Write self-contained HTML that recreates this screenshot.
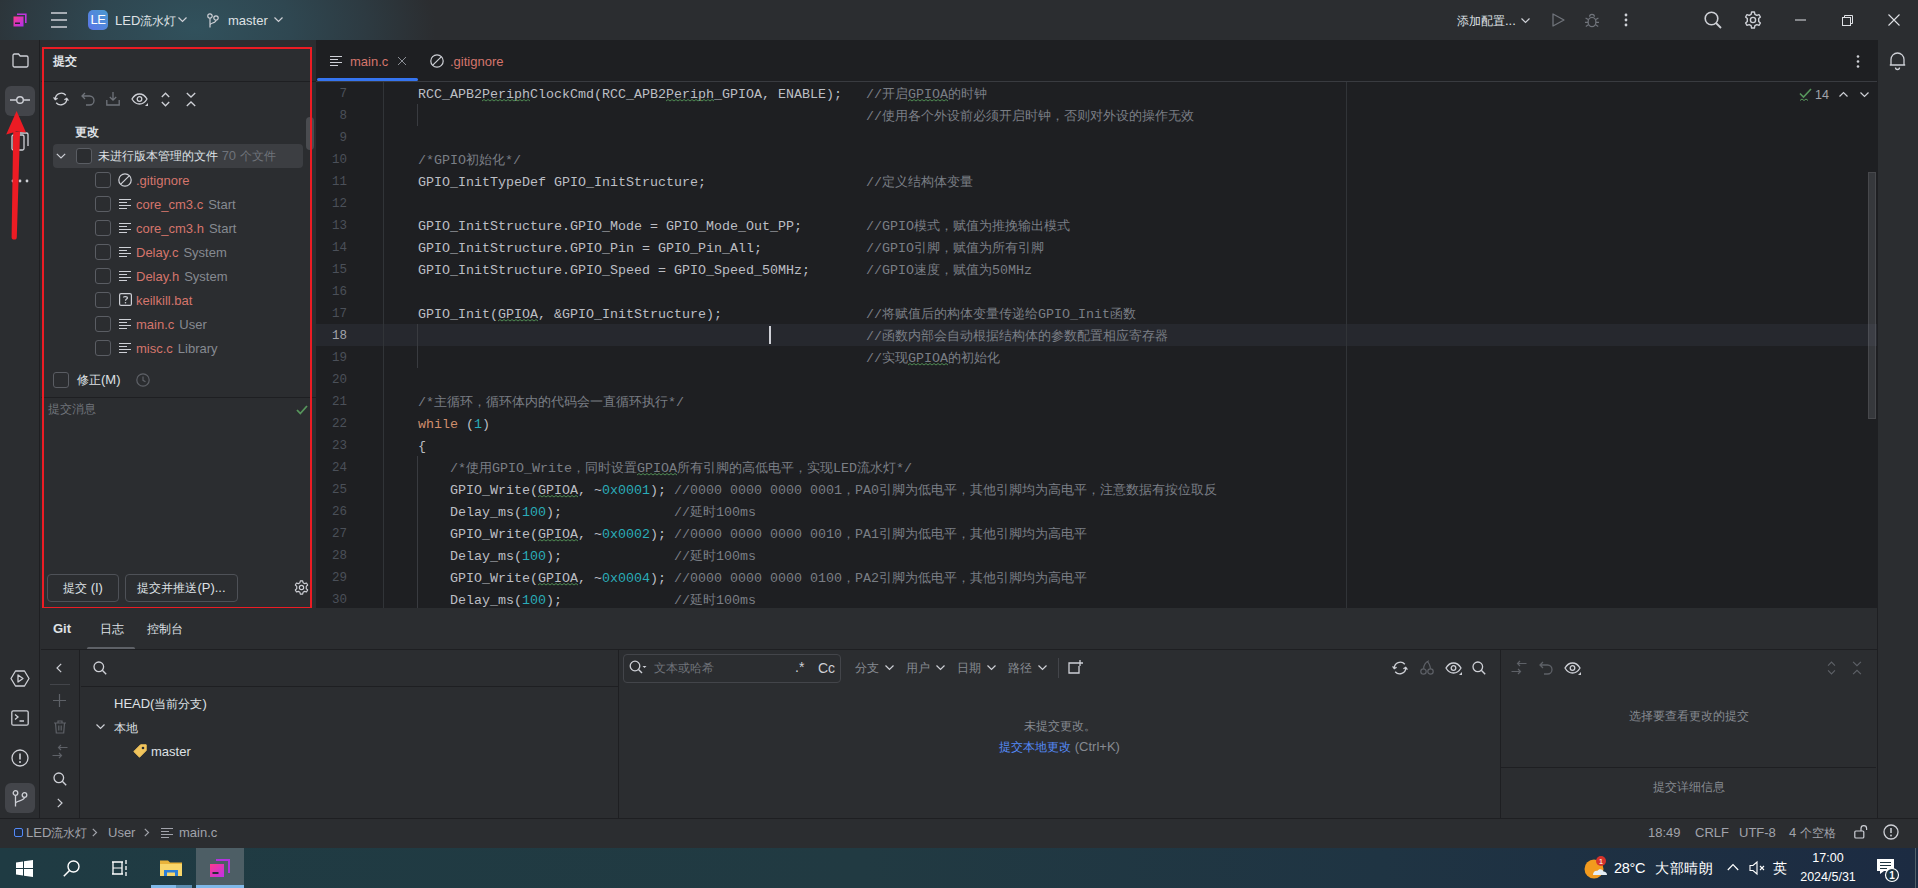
<!DOCTYPE html>
<html><head><meta charset="utf-8">
<style>
@font-face{font-family:"CJKBoxS";src:local("Liberation Sans");unicode-range:U+3000-303F,U+4E00-9FFF,U+FF00-FFEF;size-adjust:127%}
*{margin:0;padding:0;box-sizing:border-box}
html,body{width:1918px;height:888px;overflow:hidden;background:#2B2D30;font-family:"Liberation Sans",sans-serif;font-size:13px;color:#DFE1E5}
.a{position:absolute}
.t{position:absolute;white-space:pre;line-height:16px}
svg{position:absolute;overflow:visible}
#title{left:0;top:0;width:1918px;height:40px;background:radial-gradient(ellipse 240px 150px at 195px 28px,#31515C 0%,#2F4751 40%,#2D3A41 72%,#2B2D30 100%)}
#lstrip{left:0;top:40px;width:40px;height:778px;background:#2B2D30;border-right:1px solid #1E1F22}
#commit{left:41px;top:40px;width:275px;height:568px;background:#2B2D30}
#editor{left:316px;top:40px;width:1561px;height:568px;background:#1E1F22}
#rstrip{left:1877px;top:40px;width:41px;height:778px;background:#2B2D30;border-left:1px solid #1E1F22}
#bottom{left:41px;top:608px;width:1836px;height:210px;background:#2B2D30}
#status{left:0;top:818px;width:1918px;height:30px;background:#2B2D30;border-top:1px solid #1E1F22}
#taskbar{left:0;top:848px;width:1918px;height:40px;background:linear-gradient(90deg,#1F3B43 0%,#213A42 45%,#1F3443 72%,#1C2B42 100%)}
.code{font-family:"Liberation Mono",monospace;font-size:13.33px;line-height:22px;color:#BCBEC4}
.cm{color:#7A7E85}.kw{color:#CF8E6D}.nu{color:#2AACB8}
.ln{font-family:"Liberation Mono",monospace;font-size:12.5px;color:#4B5059;text-align:right;width:40px;line-height:22px}
.cb{position:absolute;width:16px;height:16px;border:1px solid #5A5D63;border-radius:3px;background:#2B2D30}
.zc{display:inline-block;overflow:visible;white-space:pre;text-align:justify;text-align-last:justify;font-family:"CJKBoxS","Liberation Sans",sans-serif}.code .zc{font-family:"CJKBoxS","Liberation Mono",monospace}.zu{font-size:12px}
.red{color:#D5756C}.gr{color:#868A91}
</style></head><body>
<div id="title" class="a"></div>

<!-- TITLE BAR -->
<svg style="left:13px;top:13px" width="14" height="14" viewBox="0 0 14 14"><defs><linearGradient id="gB" x1="0" y1="0" x2="1" y2="1"><stop offset="0" stop-color="#FF3A8C"/><stop offset="1" stop-color="#B030F0"/></linearGradient></defs><path d="M4 1.2H12.8V10" fill="none" stroke="#C035E0" stroke-width="1.6"/><rect x="0.5" y="3.5" width="10" height="10" fill="url(#gB)"/><rect x="2" y="9.5" width="5" height="1.5" fill="#2A2333"/></svg>
<svg style="left:51px;top:12px" width="16" height="16" viewBox="0 0 16 16"><path d="M0 1H16M0 8H16M0 15H16" stroke="#CED0D6" stroke-width="1.5"/></svg>
<div class="a" style="left:88px;top:10px;width:20px;height:20px;border-radius:5px;background:linear-gradient(45deg,#5B74E8,#4A9AD0)"></div>
<div class="t" style="left:88px;top:12px;width:20px;text-align:center;font-size:13px;color:#fff;letter-spacing:-0.5px">LE</div>
<div class="t" style="left:115px;top:13px;color:#DFE1E5">LED<span class="zc zu" style="width:36px">流水灯</span></div>
<svg style="left:178px;top:17px" width="9" height="6" viewBox="0 0 9 6"><path d="M0.5 0.5L4.5 4.5L8.5 0.5" fill="none" stroke="#CED0D6" stroke-width="1.2"/></svg>
<svg style="left:207px;top:13px" width="12" height="15" viewBox="0 0 12 15"><circle cx="3" cy="3" r="2.2" fill="none" stroke="#CED0D6" stroke-width="1.2"/><circle cx="9" cy="5" r="2.2" fill="none" stroke="#CED0D6" stroke-width="1.2"/><path d="M3 5.2V14.5M9 7.2C9 10 3 10 3 12" fill="none" stroke="#CED0D6" stroke-width="1.2"/></svg>
<div class="t" style="left:228px;top:13px;color:#DFE1E5">master</div>
<svg style="left:274px;top:17px" width="9" height="6" viewBox="0 0 9 6"><path d="M0.5 0.5L4.5 4.5L8.5 0.5" fill="none" stroke="#CED0D6" stroke-width="1.2"/></svg>
<div class="t" style="left:1457px;top:13px;color:#DFE1E5"><span class="zc zu" style="width:48px">添加配置</span>...</div>
<svg style="left:1521px;top:18px" width="9" height="6" viewBox="0 0 9 6"><path d="M0.5 0.5L4.5 4.5L8.5 0.5" fill="none" stroke="#CED0D6" stroke-width="1.2"/></svg>
<svg style="left:1552px;top:13px" width="13" height="14" viewBox="0 0 13 14"><path d="M1 1L12 7L1 13Z" fill="none" stroke="#6F737A" stroke-width="1.3" stroke-linejoin="round"/></svg>
<svg style="left:1584px;top:12px" width="16" height="16" viewBox="0 0 16 16"><path d="M5.6 4.8A2.4 2.4 0 0 1 10.4 4.8" fill="none" stroke="#6F737A" stroke-width="1.3"/><ellipse cx="8" cy="10" rx="3.9" ry="4.6" fill="none" stroke="#6F737A" stroke-width="1.3"/><path d="M4.2 7.6L1.6 6M4 10.3H1M4.4 12.8L1.8 14.4M11.8 7.6L14.4 6M12 10.3H15M11.6 12.8L14.2 14.4" stroke="#6F737A" stroke-width="1.2"/></svg>
<svg style="left:1624px;top:13px" width="4" height="14" viewBox="0 0 4 14"><circle cx="2" cy="2" r="1.4" fill="#CED0D6"/><circle cx="2" cy="7" r="1.4" fill="#CED0D6"/><circle cx="2" cy="12" r="1.4" fill="#CED0D6"/></svg>
<svg style="left:1704px;top:11px" width="18" height="18" viewBox="0 0 18 18"><circle cx="7.5" cy="7.5" r="6.3" fill="none" stroke="#CED0D6" stroke-width="1.6"/><path d="M12 12L17 17" stroke="#CED0D6" stroke-width="1.8"/></svg>
<svg style="left:1744px;top:11px" width="18" height="18" viewBox="0 0 18 18"><path d="M7.6 1H10.4L10.9 3.3L12.8 4.4L15 3.6L16.4 6L14.7 7.6V10.4L16.4 12L15 14.4L12.8 13.6L10.9 14.7L10.4 17H7.6L7.1 14.7L5.2 13.6L3 14.4L1.6 12L3.3 10.4V7.6L1.6 6L3 3.6L5.2 4.4L7.1 3.3Z" fill="none" stroke="#CED0D6" stroke-width="1.4" stroke-linejoin="round"/><circle cx="9" cy="9" r="2.6" fill="none" stroke="#CED0D6" stroke-width="1.4"/></svg>
<svg style="left:1795px;top:19px" width="11" height="2" viewBox="0 0 11 2"><path d="M0 1H11" stroke="#DFE1E5" stroke-width="1"/></svg>
<svg style="left:1842px;top:15px" width="11" height="11" viewBox="0 0 11 11"><rect x="0.5" y="2.5" width="8" height="8" fill="none" stroke="#DFE1E5"/><path d="M2.5 2.5V0.5H10.5V8.5H8.5" fill="none" stroke="#DFE1E5"/></svg>
<svg style="left:1888px;top:14px" width="12" height="12" viewBox="0 0 12 12"><path d="M0.5 0.5L11.5 11.5M11.5 0.5L0.5 11.5" stroke="#DFE1E5" stroke-width="1.1"/></svg>
<div id="lstrip" class="a"></div>
<div id="commit" class="a"></div>
<!-- LEFT STRIP -->
<svg style="left:12px;top:53px" width="17" height="15" viewBox="0 0 17 15"><path d="M1 2.5C1 1.7 1.6 1 2.4 1H6.5L8.2 3H14.6C15.4 3 16 3.6 16 4.4V12.6C16 13.4 15.4 14 14.6 14H2.4C1.6 14 1 13.4 1 12.6Z" fill="none" stroke="#CED0D6" stroke-width="1.3"/></svg>
<div class="a" style="left:5px;top:86px;width:30px;height:30px;border-radius:6px;background:#43454A"></div>
<svg style="left:10px;top:95px" width="20" height="10" viewBox="0 0 20 10"><path d="M0 5H6.5M13.5 5H20" stroke="#CED0D6" stroke-width="1.4"/><circle cx="10" cy="5" r="3.3" fill="none" stroke="#CED0D6" stroke-width="1.4"/></svg>
<svg style="left:11px;top:132px" width="18" height="19" viewBox="0 0 18 19"><rect x="1" y="3" width="12" height="15" rx="1.5" fill="none" stroke="#CED0D6" stroke-width="1.3"/><path d="M5 1H15.5C16.3 1 17 1.7 17 2.5V14" fill="none" stroke="#CED0D6" stroke-width="1.3"/></svg>
<svg style="left:11px;top:179px" width="18" height="4" viewBox="0 0 18 4"><circle cx="2" cy="2" r="1.4" fill="#CED0D6"/><circle cx="9" cy="2" r="1.4" fill="#CED0D6"/><circle cx="16" cy="2" r="1.4" fill="#CED0D6"/></svg>
<svg style="left:4px;top:110px" width="26" height="130" viewBox="0 0 26 130"><path d="M9.2 22L16 22L12.8 127A2.6 2.6 0 0 1 7.6 127Z" fill="#EC1C24"/><path d="M12.6 1L2.2 24.5L12.5 21.5L22 22.5Z" fill="#EC1C24"/></svg>
<svg style="left:10px;top:670px" width="20" height="17" viewBox="0 0 20 17"><path d="M5.5 1H14.5L19 8.5L14.5 16H5.5L1 8.5Z" fill="none" stroke="#CED0D6" stroke-width="1.3" stroke-linejoin="round"/><path d="M8 5L13 8.5L8 12Z" fill="none" stroke="#CED0D6" stroke-width="1.3" stroke-linejoin="round"/></svg>
<svg style="left:11px;top:710px" width="18" height="16" viewBox="0 0 18 16"><rect x="0.8" y="0.8" width="16.4" height="14.4" rx="1.5" fill="none" stroke="#CED0D6" stroke-width="1.3"/><path d="M4 4.5L7 7L4 9.5M8.5 11H13" fill="none" stroke="#CED0D6" stroke-width="1.3"/></svg>
<svg style="left:11px;top:749px" width="18" height="18" viewBox="0 0 18 18"><circle cx="9" cy="9" r="8" fill="none" stroke="#CED0D6" stroke-width="1.3"/><path d="M9 4.5V10.5" stroke="#CED0D6" stroke-width="1.6"/><circle cx="9" cy="13" r="1" fill="#CED0D6"/></svg>
<div class="a" style="left:5px;top:783px;width:30px;height:30px;border-radius:6px;background:#43454A"></div>
<svg style="left:12px;top:790px" width="16" height="17" viewBox="0 0 16 17"><circle cx="3.5" cy="3" r="2.3" fill="none" stroke="#CED0D6" stroke-width="1.3"/><circle cx="12.5" cy="5" r="2.3" fill="none" stroke="#CED0D6" stroke-width="1.3"/><path d="M3.5 5.3V16.5M12.5 7.3C12.5 11 3.5 10.5 3.5 13.5" fill="none" stroke="#CED0D6" stroke-width="1.3"/></svg>


<!-- COMMIT PANEL -->
<div class="t" style="left:53px;top:53px;font-weight:bold;color:#DFE1E5"><span class="zc zu" style="width:24px">提交</span></div>
<div class="a" style="left:41px;top:81px;width:275px;height:1px;background:#1E1F22"></div>
<svg style="left:53px;top:91px" width="16" height="16" viewBox="0 0 16 16"><path d="M12.8 4.2A6 6 0 0 0 2.3 8.3M3.2 11.8A6 6 0 0 0 13.7 7.7" fill="none" stroke="#CED0D6" stroke-width="1.3"/><path d="M0.6 6.3L2.3 8.6L4.6 7.2M15.4 9.7L13.7 7.4L11.4 8.8" fill="none" stroke="#CED0D6" stroke-width="1.3"/></svg>
<svg style="left:81px;top:92px" width="14" height="14" viewBox="0 0 14 14"><path d="M4 1L1 4L4 7M1 4H8.5A4.5 4.5 0 0 1 8.5 13H5" fill="none" stroke="#6F737A" stroke-width="1.3"/></svg>
<svg style="left:106px;top:92px" width="14" height="14" viewBox="0 0 14 14"><path d="M7 0V8M3.8 5L7 8.2L10.2 5M0.8 8V13H13.2V8" fill="none" stroke="#6F737A" stroke-width="1.3"/></svg>
<svg style="left:131px;top:93px" width="18" height="14" viewBox="0 0 18 14"><path d="M1 6C3 2.5 5.5 1 8.5 1S14 2.5 16 6C14 9.5 11.5 11 8.5 11S3 9.5 1 6Z" fill="none" stroke="#CED0D6" stroke-width="1.3"/><circle cx="8.5" cy="6" r="2.3" fill="none" stroke="#CED0D6" stroke-width="1.3"/><path d="M17 10V13H14Z" fill="#CED0D6"/></svg>
<svg style="left:161px;top:92px" width="9" height="15" viewBox="0 0 9 15"><path d="M0.8 5L4.5 1.2L8.2 5M0.8 10L4.5 13.8L8.2 10" fill="none" stroke="#CED0D6" stroke-width="1.3"/></svg>
<svg style="left:186px;top:92px" width="10" height="15" viewBox="0 0 10 15"><path d="M0.8 1L5 5L9.2 1M0.8 14L5 10L9.2 14" fill="none" stroke="#CED0D6" stroke-width="1.3"/></svg>
<div class="t" style="left:75px;top:124px;font-weight:bold;color:#DFE1E5"><span class="zc zu" style="width:24px">更改</span></div>
<div class="a" style="left:53px;top:144px;width:250px;height:24px;border-radius:4px;background:#3C3E42"></div>
<svg style="left:56px;top:153px" width="10" height="6" viewBox="0 0 10 6"><path d="M0.8 0.8L5 5L9.2 0.8" fill="none" stroke="#CED0D6" stroke-width="1.2"/></svg>
<div class="cb" style="left:76px;top:148px"></div>
<div class="t" style="left:98px;top:148px;color:#DFE1E5"><span class="zc zu" style="width:120px">未进行版本管理的文件</span> <span class="gr" style="color:#6F737A">70 <span class="zc zu" style="width:36px">个文件</span></span></div>
<div class="cb" style="left:95px;top:172px"></div>
<svg style="left:118px;top:173px" width="14" height="14" viewBox="0 0 14 14"><circle cx="7" cy="7" r="6.2" fill="none" stroke="#CED0D6" stroke-width="1.2"/><path d="M2.8 11.2L11.2 2.8" stroke="#CED0D6" stroke-width="1.2"/></svg>
<div class="t" style="left:136px;top:173px"><span class="red">.gitignore</span></div>
<div class="cb" style="left:95px;top:196px"></div>
<svg style="left:119px;top:199px" width="13" height="10" viewBox="0 0 13 10"><path d="M0 0.5H12M0 3.5H8M0 6.5H12M0 9.5H8" stroke="#CED0D6" stroke-width="1"/></svg>
<div class="t" style="left:136px;top:197px"><span class="red">core_cm3.c</span><span class="gr" style="margin-left:5px">Start</span></div>
<div class="cb" style="left:95px;top:220px"></div>
<svg style="left:119px;top:223px" width="13" height="10" viewBox="0 0 13 10"><path d="M0 0.5H12M0 3.5H8M0 6.5H12M0 9.5H8" stroke="#CED0D6" stroke-width="1"/></svg>
<div class="t" style="left:136px;top:221px"><span class="red">core_cm3.h</span><span class="gr" style="margin-left:5px">Start</span></div>
<div class="cb" style="left:95px;top:244px"></div>
<svg style="left:119px;top:247px" width="13" height="10" viewBox="0 0 13 10"><path d="M0 0.5H12M0 3.5H8M0 6.5H12M0 9.5H8" stroke="#CED0D6" stroke-width="1"/></svg>
<div class="t" style="left:136px;top:245px"><span class="red">Delay.c</span><span class="gr" style="margin-left:5px">System</span></div>
<div class="cb" style="left:95px;top:268px"></div>
<svg style="left:119px;top:271px" width="13" height="10" viewBox="0 0 13 10"><path d="M0 0.5H12M0 3.5H8M0 6.5H12M0 9.5H8" stroke="#CED0D6" stroke-width="1"/></svg>
<div class="t" style="left:136px;top:269px"><span class="red">Delay.h</span><span class="gr" style="margin-left:5px">System</span></div>
<div class="cb" style="left:95px;top:292px"></div>
<svg style="left:119px;top:293px" width="13" height="13" viewBox="0 0 13 13"><rect x="0.6" y="0.6" width="11.8" height="11.8" rx="1.5" fill="none" stroke="#CED0D6" stroke-width="1.2"/><path d="M4.5 4.6C4.5 3.2 8.5 3.2 8.5 4.8C8.5 6.2 6.5 6 6.5 7.8" fill="none" stroke="#CED0D6" stroke-width="1.2"/><circle cx="6.5" cy="9.8" r="0.8" fill="#CED0D6"/></svg>
<div class="t" style="left:136px;top:293px"><span class="red">keilkill.bat</span></div>
<div class="cb" style="left:95px;top:316px"></div>
<svg style="left:119px;top:319px" width="13" height="10" viewBox="0 0 13 10"><path d="M0 0.5H12M0 3.5H8M0 6.5H12M0 9.5H8" stroke="#CED0D6" stroke-width="1"/></svg>
<div class="t" style="left:136px;top:317px"><span class="red">main.c</span><span class="gr" style="margin-left:5px">User</span></div>
<div class="cb" style="left:95px;top:340px"></div>
<svg style="left:119px;top:343px" width="13" height="10" viewBox="0 0 13 10"><path d="M0 0.5H12M0 3.5H8M0 6.5H12M0 9.5H8" stroke="#CED0D6" stroke-width="1"/></svg>
<div class="t" style="left:136px;top:341px"><span class="red">misc.c</span><span class="gr" style="margin-left:5px">Library</span></div>

<div class="a" style="left:306px;top:117px;width:8px;height:33px;border-radius:4px;background:#4A4C50"></div>
<div class="cb" style="left:53px;top:372px"></div>
<div class="t" style="left:77px;top:372px;color:#DFE1E5"><span class="zc zu" style="width:24px">修正</span>(M)</div>
<svg style="left:136px;top:373px" width="14" height="14" viewBox="0 0 14 14"><circle cx="7" cy="7" r="6.2" fill="none" stroke="#5E6167" stroke-width="1.2"/><path d="M7 3.5V7.3L9.5 8.8" fill="none" stroke="#5E6167" stroke-width="1.2"/></svg>
<div class="a" style="left:41px;top:397px;width:275px;height:1px;background:#1E1F22"></div>
<div class="t" style="left:48px;top:401px;color:#6F737A"><span class="zc zu" style="width:48px">提交消息</span></div>
<svg style="left:296px;top:405px" width="12" height="10" viewBox="0 0 12 10"><path d="M1 5L4.3 8.5L11 1" fill="none" stroke="#57965C" stroke-width="1.8"/></svg>
<div class="a" style="left:47px;top:574px;width:72px;height:28px;border:1px solid #4E5157;border-radius:4px"></div>
<div class="t" style="left:47px;top:580px;width:72px;text-align:center;color:#DFE1E5"><span class="zc zu" style="width:24px">提交</span> (I)</div>
<div class="a" style="left:125px;top:574px;width:113px;height:28px;border:1px solid #4E5157;border-radius:4px"></div>
<div class="t" style="left:125px;top:580px;width:113px;text-align:center;color:#DFE1E5"><span class="zc zu" style="width:60px">提交并推送</span>(P)...</div>
<svg style="left:294px;top:580px" width="15" height="15" viewBox="0 0 18 18"><path d="M7.6 1H10.4L10.9 3.3L12.8 4.4L15 3.6L16.4 6L14.7 7.6V10.4L16.4 12L15 14.4L12.8 13.6L10.9 14.7L10.4 17H7.6L7.1 14.7L5.2 13.6L3 14.4L1.6 12L3.3 10.4V7.6L1.6 6L3 3.6L5.2 4.4L7.1 3.3Z" fill="none" stroke="#CED0D6" stroke-width="1.4" stroke-linejoin="round"/><circle cx="9" cy="9" r="2.6" fill="none" stroke="#CED0D6" stroke-width="1.4"/></svg>
<div class="a" style="left:42px;top:47px;width:270px;height:562px;border:2px solid #EC1C24"></div>
<div id="editor" class="a"></div>
<div id="rstrip" class="a"></div>
<!-- EDITOR -->
<svg style="left:330px;top:56px" width="13" height="10" viewBox="0 0 13 10"><path d="M0 0.5H12M0 3.5H8M0 6.5H12M0 9.5H8" stroke="#CED0D6" stroke-width="1"/></svg>
<div class="t" style="left:350px;top:54px;color:#D5756C">main.c</div>
<svg style="left:398px;top:57px" width="8" height="8" viewBox="0 0 8 8"><path d="M0 0L8 8M8 0L0 8" stroke="#8C8F96" stroke-width="1"/></svg>
<div class="a" style="left:317px;top:78px;width:101px;height:3px;border-radius:2px;background:#3574F0"></div>
<svg style="left:430px;top:54px" width="14" height="14" viewBox="0 0 14 14"><circle cx="7" cy="7" r="6.2" fill="none" stroke="#CED0D6" stroke-width="1.2"/><path d="M2.8 11.2L11.2 2.8" stroke="#CED0D6" stroke-width="1.2"/></svg>
<div class="t" style="left:450px;top:54px;color:#D5756C">.gitignore</div>
<svg style="left:1856px;top:55px" width="4" height="13" viewBox="0 0 4 13"><circle cx="2" cy="1.5" r="1.3" fill="#CED0D6"/><circle cx="2" cy="6.5" r="1.3" fill="#CED0D6"/><circle cx="2" cy="11.5" r="1.3" fill="#CED0D6"/></svg>
<div class="a" style="left:316px;top:81px;width:1561px;height:1px;background:#393B40"></div>
<div class="a" style="left:316px;top:324px;width:1561px;height:22px;background:#26282E"></div>
<div class="a" style="left:383px;top:82px;width:1px;height:526px;background:#313438"></div>
<div class="a" style="left:1346px;top:82px;width:1px;height:526px;background:#313438"></div>
<div class="a" style="left:417px;top:104px;width:1px;height:22px;background:#393B40"></div>
<div class="a" style="left:417px;top:324px;width:1px;height:44px;background:#393B40"></div>
<div class="a" style="left:417px;top:456px;width:1px;height:152px;background:#393B40"></div>
<div class="t ln" style="left:307px;margin-top:1px;top:82px;color:#4B5059">7</div>
<div class="t ln" style="left:307px;margin-top:1px;top:104px;color:#4B5059">8</div>
<div class="t ln" style="left:307px;margin-top:1px;top:126px;color:#4B5059">9</div>
<div class="t ln" style="left:307px;margin-top:1px;top:148px;color:#4B5059">10</div>
<div class="t ln" style="left:307px;margin-top:1px;top:170px;color:#4B5059">11</div>
<div class="t ln" style="left:307px;margin-top:1px;top:192px;color:#4B5059">12</div>
<div class="t ln" style="left:307px;margin-top:1px;top:214px;color:#4B5059">13</div>
<div class="t ln" style="left:307px;margin-top:1px;top:236px;color:#4B5059">14</div>
<div class="t ln" style="left:307px;margin-top:1px;top:258px;color:#4B5059">15</div>
<div class="t ln" style="left:307px;margin-top:1px;top:280px;color:#4B5059">16</div>
<div class="t ln" style="left:307px;margin-top:1px;top:302px;color:#4B5059">17</div>
<div class="t ln" style="left:307px;margin-top:1px;top:324px;color:#A1A3AB">18</div>
<div class="t ln" style="left:307px;margin-top:1px;top:346px;color:#4B5059">19</div>
<div class="t ln" style="left:307px;margin-top:1px;top:368px;color:#4B5059">20</div>
<div class="t ln" style="left:307px;margin-top:1px;top:390px;color:#4B5059">21</div>
<div class="t ln" style="left:307px;margin-top:1px;top:412px;color:#4B5059">22</div>
<div class="t ln" style="left:307px;margin-top:1px;top:434px;color:#4B5059">23</div>
<div class="t ln" style="left:307px;margin-top:1px;top:456px;color:#4B5059">24</div>
<div class="t ln" style="left:307px;margin-top:1px;top:478px;color:#4B5059">25</div>
<div class="t ln" style="left:307px;margin-top:1px;top:500px;color:#4B5059">26</div>
<div class="t ln" style="left:307px;margin-top:1px;top:522px;color:#4B5059">27</div>
<div class="t ln" style="left:307px;margin-top:1px;top:544px;color:#4B5059">28</div>
<div class="t ln" style="left:307px;margin-top:1px;top:566px;color:#4B5059">29</div>
<div class="t ln" style="left:307px;margin-top:1px;top:588px;color:#4B5059">30</div>

<div class="t code" style="left:386px;margin-top:1.5px;top:82px">    RCC_APB2PeriphClockCmd(RCC_APB2Periph_GPIOA, ENABLE);   <span class="cm">//<span class="zc" style="width:26px">开启</span>GPIOA<span class="zc" style="width:39px">的时钟</span></span></div>
<div class="t code" style="left:386px;margin-top:1.5px;top:104px">                                                            <span class="cm">//<span class="zc" style="width:312px">使用各个外设前必须开启时钟，否则对外设的操作无效</span></span></div>
<div class="t code" style="left:386px;margin-top:1.5px;top:126px"></div>
<div class="t code" style="left:386px;margin-top:1.5px;top:148px">    <span class="cm">/*GPIO<span class="zc" style="width:39px">初始化</span>*/</span></div>
<div class="t code" style="left:386px;margin-top:1.5px;top:170px">    GPIO_InitTypeDef GPIO_InitStructure;                    <span class="cm">//<span class="zc" style="width:91px">定义结构体变量</span></span></div>
<div class="t code" style="left:386px;margin-top:1.5px;top:192px"></div>
<div class="t code" style="left:386px;margin-top:1.5px;top:214px">    GPIO_InitStructure.GPIO_Mode = GPIO_Mode_Out_PP;        <span class="cm">//GPIO<span class="zc" style="width:156px">模式，赋值为推挽输出模式</span></span></div>
<div class="t code" style="left:386px;margin-top:1.5px;top:236px">    GPIO_InitStructure.GPIO_Pin = GPIO_Pin_All;             <span class="cm">//GPIO<span class="zc" style="width:130px">引脚，赋值为所有引脚</span></span></div>
<div class="t code" style="left:386px;margin-top:1.5px;top:258px">    GPIO_InitStructure.GPIO_Speed = GPIO_Speed_50MHz;       <span class="cm">//GPIO<span class="zc" style="width:78px">速度，赋值为</span>50MHz</span></div>
<div class="t code" style="left:386px;margin-top:1.5px;top:280px"></div>
<div class="t code" style="left:386px;margin-top:1.5px;top:302px">    GPIO_Init(GPIOA, &amp;GPIO_InitStructure);                  <span class="cm">//<span class="zc" style="width:156px">将赋值后的构体变量传递给</span>GPIO_Init<span class="zc" style="width:26px">函数</span></span></div>
<div class="t code" style="left:386px;margin-top:1.5px;top:324px">                                                            <span class="cm">//<span class="zc" style="width:286px">函数内部会自动根据结构体的参数配置相应寄存器</span></span></div>
<div class="t code" style="left:386px;margin-top:1.5px;top:346px">                                                            <span class="cm">//<span class="zc" style="width:26px">实现</span>GPIOA<span class="zc" style="width:52px">的初始化</span></span></div>
<div class="t code" style="left:386px;margin-top:1.5px;top:368px"></div>
<div class="t code" style="left:386px;margin-top:1.5px;top:390px">    <span class="cm">/*<span class="zc" style="width:234px">主循环，循环体内的代码会一直循环执行</span>*/</span></div>
<div class="t code" style="left:386px;margin-top:1.5px;top:412px">    <span class="kw">while</span> (<span class="nu">1</span>)</div>
<div class="t code" style="left:386px;margin-top:1.5px;top:434px">    {</div>
<div class="t code" style="left:386px;margin-top:1.5px;top:456px">        <span class="cm">/*<span class="zc" style="width:26px">使用</span>GPIO_Write<span class="zc" style="width:65px">，同时设置</span>GPIOA<span class="zc" style="width:156px">所有引脚的高低电平，实现</span>LED<span class="zc" style="width:39px">流水灯</span>*/</span></div>
<div class="t code" style="left:386px;margin-top:1.5px;top:478px">        GPIO_Write(GPIOA, ~<span class="nu">0x0001</span>); <span class="cm">//0000 0000 0000 0001<span class="zc" style="width:13px">，</span>PA0<span class="zc" style="width:338px">引脚为低电平，其他引脚均为高电平，注意数据有按位取反</span></span></div>
<div class="t code" style="left:386px;margin-top:1.5px;top:500px">        Delay_ms(<span class="nu">100</span>);              <span class="cm">//<span class="zc" style="width:26px">延时</span>100ms</span></div>
<div class="t code" style="left:386px;margin-top:1.5px;top:522px">        GPIO_Write(GPIOA, ~<span class="nu">0x0002</span>); <span class="cm">//0000 0000 0000 0010<span class="zc" style="width:13px">，</span>PA1<span class="zc" style="width:208px">引脚为低电平，其他引脚均为高电平</span></span></div>
<div class="t code" style="left:386px;margin-top:1.5px;top:544px">        Delay_ms(<span class="nu">100</span>);              <span class="cm">//<span class="zc" style="width:26px">延时</span>100ms</span></div>
<div class="t code" style="left:386px;margin-top:1.5px;top:566px">        GPIO_Write(GPIOA, ~<span class="nu">0x0004</span>); <span class="cm">//0000 0000 0000 0100<span class="zc" style="width:13px">，</span>PA2<span class="zc" style="width:208px">引脚为低电平，其他引脚均为高电平</span></span></div>
<div class="t code" style="left:386px;margin-top:1.5px;top:588px">        Delay_ms(<span class="nu">100</span>);              <span class="cm">//<span class="zc" style="width:26px">延时</span>100ms</span></div>

<svg style="left:0;top:0" width="1918" height="888" viewBox="0 0 1918 888"><path d="M482 100L484 98.5L486 100L488 98.5L490 100L492 98.5L494 100L496 98.5L498 100L500 98.5L502 100L504 98.5L506 100L508 98.5L510 100L512 98.5L514 100L516 98.5L518 100L520 98.5L522 100L524 98.5L526 100L528 98.5L530 100M666 100L668 98.5L670 100L672 98.5L674 100L676 98.5L678 100L680 98.5L682 100L684 98.5L686 100L688 98.5L690 100L692 98.5L694 100L696 98.5L698 100L700 98.5L702 100L704 98.5L706 100L708 98.5L710 100L712 98.5L714 100M908 100L910 98.5L912 100L914 98.5L916 100L918 98.5L920 100L922 98.5L924 100L926 98.5L928 100L930 98.5L932 100L934 98.5L936 100L938 98.5L940 100L942 98.5L944 100L946 98.5L948 100M498 320L500 318.5L502 320L504 318.5L506 320L508 318.5L510 320L512 318.5L514 320L516 318.5L518 320L520 318.5L522 320L524 318.5L526 320L528 318.5L530 320L532 318.5L534 320L536 318.5L538 320M908 364L910 362.5L912 364L914 362.5L916 364L918 362.5L920 364L922 362.5L924 364L926 362.5L928 364L930 362.5L932 364L934 362.5L936 364L938 362.5L940 364L942 362.5L944 364L946 362.5L948 364M538 496L540 494.5L542 496L544 494.5L546 496L548 494.5L550 496L552 494.5L554 496L556 494.5L558 496L560 494.5L562 496L564 494.5L566 496L568 494.5L570 496L572 494.5L574 496L576 494.5L578 496M538 540L540 538.5L542 540L544 538.5L546 540L548 538.5L550 540L552 538.5L554 540L556 538.5L558 540L560 538.5L562 540L564 538.5L566 540L568 538.5L570 540L572 538.5L574 540L576 538.5L578 540M538 584L540 582.5L542 584L544 582.5L546 584L548 582.5L550 584L552 582.5L554 584L556 582.5L558 584L560 582.5L562 584L564 582.5L566 584L568 582.5L570 584L572 582.5L574 584L576 582.5L578 584M637 474L639 472.5L641 474L643 472.5L645 474L647 472.5L649 474L651 472.5L653 474L655 472.5L657 474L659 472.5L661 474L663 472.5L665 474L667 472.5L669 474L671 472.5L673 474L675 472.5L677 474" fill="none" stroke="#4E8A52" stroke-width="1" transform="translate(0,1)"/></svg>
<div class="a" style="left:769px;top:326px;width:2px;height:18px;background:#CED0D6"></div>
<svg style="left:1799px;top:88px" width="13" height="14" viewBox="0 0 13 14"><path d="M1 5.5L4.5 9L12 1" fill="none" stroke="#57965C" stroke-width="1.6"/><path d="M1 12.5L3 11L5 12.5L7 11L9 12.5" fill="none" stroke="#57965C" stroke-width="1"/></svg>
<div class="t" style="left:1815px;top:87px;color:#A1A3AB;font-size:12.5px">14</div>
<svg style="left:1839px;top:91px" width="9" height="6" viewBox="0 0 9 6"><path d="M0.5 5.5L4.5 1.5L8.5 5.5" fill="none" stroke="#CED0D6" stroke-width="1.2"/></svg>
<svg style="left:1860px;top:92px" width="9" height="6" viewBox="0 0 9 6"><path d="M0.5 0.5L4.5 4.5L8.5 0.5" fill="none" stroke="#CED0D6" stroke-width="1.2"/></svg>
<div class="a" style="left:1868px;top:172px;width:8px;height:247px;background:rgba(120,122,128,0.28);border:1px solid rgba(130,132,138,0.22)"></div>
<svg style="left:1889px;top:51px" width="17" height="19" viewBox="0 0 17 19"><path d="M2 14V8.5A6.5 6.5 0 0 1 15 8.5V14H2ZM0.8 14H16.2M6.5 16.5A2 2 0 0 0 10.5 16.5" fill="none" stroke="#CED0D6" stroke-width="1.3" stroke-linejoin="round"/></svg>

<div id="bottom" class="a"></div>

<!-- BOTTOM PANEL -->
<div class="t" style="left:53px;top:621px;font-weight:bold;color:#DFE1E5">Git</div>
<div class="t" style="left:100px;top:621px;color:#DFE1E5"><span class="zc zu" style="width:24px">日志</span></div>
<div class="t" style="left:147px;top:621px;color:#DFE1E5"><span class="zc zu" style="width:36px">控制台</span></div>
<div class="a" style="left:87px;top:647px;width:48px;height:3px;border-radius:2px;background:#5E6167"></div>
<div class="a" style="left:41px;top:649px;width:1836px;height:1px;background:#1E1F22"></div>
<div class="a" style="left:79px;top:650px;width:1px;height:168px;background:#1E1F22"></div>
<svg style="left:56px;top:663px" width="6" height="10" viewBox="0 0 6 10"><path d="M5.2 0.8L1 5L5.2 9.2" fill="none" stroke="#CED0D6" stroke-width="1.2"/></svg>
<div class="a" style="left:50px;top:684px;width:20px;height:1px;background:#43454A"></div>
<svg style="left:53px;top:694px" width="13" height="13" viewBox="0 0 13 13"><path d="M6.5 0V13M0 6.5H13" stroke="#5E6167" stroke-width="1.2"/></svg>
<svg style="left:54px;top:720px" width="12" height="14" viewBox="0 0 12 14"><path d="M0 3H12M4 3V1H8V3M1.5 3L2.3 13H9.7L10.5 3M4.8 5.5V10.5M7.2 5.5V10.5" fill="none" stroke="#5E6167" stroke-width="1.2"/></svg>
<svg style="left:52px;top:744px" width="16" height="15" viewBox="0 0 16 15"><path d="M9 1L6.5 3.5L9 6M6.5 3.5H15.5M7 9L9.5 11.5L7 14M9.5 11.5H0.5" fill="none" stroke="#5E6167" stroke-width="1.2"/></svg>
<svg style="left:53px;top:772px" width="14" height="14" viewBox="0 0 14 14"><circle cx="5.8" cy="5.8" r="4.8" fill="none" stroke="#CED0D6" stroke-width="1.3"/><path d="M9.3 9.3L13.2 13.2" stroke="#CED0D6" stroke-width="1.4"/></svg>
<svg style="left:57px;top:798px" width="6" height="10" viewBox="0 0 6 10"><path d="M0.8 0.8L5 5L0.8 9.2" fill="none" stroke="#CED0D6" stroke-width="1.2"/></svg>
<svg style="left:93px;top:661px" width="14" height="14" viewBox="0 0 14 14"><circle cx="5.8" cy="5.8" r="4.8" fill="none" stroke="#CED0D6" stroke-width="1.3"/><path d="M9.3 9.3L13.2 13.2" stroke="#CED0D6" stroke-width="1.4"/></svg>
<div class="a" style="left:81px;top:686px;width:537px;height:1px;background:#1E1F22"></div>
<div class="t" style="left:114px;top:696px;color:#DFE1E5">HEAD(<span class="zc zu" style="width:48px">当前分支</span>)</div>
<svg style="left:96px;top:724px" width="9" height="6" viewBox="0 0 9 6"><path d="M0.5 0.5L4.5 4.5L8.5 0.5" fill="none" stroke="#CED0D6" stroke-width="1.2"/></svg>
<div class="t" style="left:114px;top:720px;color:#DFE1E5"><span class="zc zu" style="width:24px">本地</span></div>
<svg style="left:133px;top:744px" width="14" height="14" viewBox="0 0 14 14"><path d="M7.5 0.8H13.2V6.5L6.5 13.2L0.8 7.5Z" fill="#F2C55C" stroke="#F2C55C" stroke-width="1" stroke-linejoin="round"/><circle cx="10" cy="4" r="1.3" fill="#2B2D30"/></svg>
<div class="t" style="left:151px;top:744px;color:#DFE1E5">master</div>
<div class="a" style="left:618px;top:650px;width:1px;height:168px;background:#1E1F22"></div>
<div class="a" style="left:623px;top:654px;width:218px;height:29px;border:1px solid #43454A;border-radius:4px"></div>
<svg style="left:629px;top:660px" width="18" height="15" viewBox="0 0 18 15"><circle cx="6" cy="6" r="4.8" fill="none" stroke="#CED0D6" stroke-width="1.3"/><path d="M9.5 9.5L13 13" stroke="#CED0D6" stroke-width="1.4"/><path d="M13.5 6H17.5L15.5 8Z" fill="#CED0D6"/></svg>
<div class="t" style="left:654px;top:660px;color:#6F737A"><span class="zc zu" style="width:60px">文本或哈希</span></div>
<div class="t" style="left:795px;top:659px;color:#CED0D6;font-size:14px">.*</div>
<div class="t" style="left:818px;top:660px;color:#CED0D6;font-size:14px">Cc</div>
<div class="t" style="left:855px;top:660px;color:#868A91"><span class="zc zu" style="width:24px">分支</span></div><svg style="left:885px;top:665px" width="9" height="6" viewBox="0 0 9 6"><path d="M0.5 0.5L4.5 4.5L8.5 0.5" fill="none" stroke="#CED0D6" stroke-width="1.2"/></svg>
<div class="t" style="left:906px;top:660px;color:#868A91"><span class="zc zu" style="width:24px">用户</span></div><svg style="left:936px;top:665px" width="9" height="6" viewBox="0 0 9 6"><path d="M0.5 0.5L4.5 4.5L8.5 0.5" fill="none" stroke="#CED0D6" stroke-width="1.2"/></svg>
<div class="t" style="left:957px;top:660px;color:#868A91"><span class="zc zu" style="width:24px">日期</span></div><svg style="left:987px;top:665px" width="9" height="6" viewBox="0 0 9 6"><path d="M0.5 0.5L4.5 4.5L8.5 0.5" fill="none" stroke="#CED0D6" stroke-width="1.2"/></svg>
<div class="t" style="left:1008px;top:660px;color:#868A91"><span class="zc zu" style="width:24px">路径</span></div><svg style="left:1038px;top:665px" width="9" height="6" viewBox="0 0 9 6"><path d="M0.5 0.5L4.5 4.5L8.5 0.5" fill="none" stroke="#CED0D6" stroke-width="1.2"/></svg>
<div class="a" style="left:1058px;top:658px;width:1px;height:20px;background:#43454A"></div>
<svg style="left:1068px;top:660px" width="15" height="14" viewBox="0 0 15 14"><path d="M9 3H1V13H11V6" fill="none" stroke="#CED0D6" stroke-width="1.3"/><path d="M12 0V6M9 3H15" stroke="#CED0D6" stroke-width="1.3"/></svg>
<svg style="left:1392px;top:660px" width="16" height="16" viewBox="0 0 16 16"><path d="M12.8 4.2A6 6 0 0 0 2.3 8.3M3.2 11.8A6 6 0 0 0 13.7 7.7" fill="none" stroke="#CED0D6" stroke-width="1.3"/><path d="M0.6 6.3L2.3 8.6L4.6 7.2M15.4 9.7L13.7 7.4L11.4 8.8" fill="none" stroke="#CED0D6" stroke-width="1.3"/></svg>
<svg style="left:1420px;top:660px" width="14" height="15" viewBox="0 0 14 15"><circle cx="3.5" cy="11.5" r="2.7" fill="none" stroke="#5E6167" stroke-width="1.2"/><circle cx="10.5" cy="11.5" r="2.7" fill="none" stroke="#5E6167" stroke-width="1.2"/><path d="M3.5 8.8C4 4 7 1.5 9 0.8M10.5 8.8C10 5 8.5 2.5 7 1.5" fill="none" stroke="#5E6167" stroke-width="1.2"/></svg>
<svg style="left:1445px;top:662px" width="18" height="14" viewBox="0 0 18 14"><path d="M1 6C3 2.5 5.5 1 8.5 1S14 2.5 16 6C14 9.5 11.5 11 8.5 11S3 9.5 1 6Z" fill="none" stroke="#CED0D6" stroke-width="1.3"/><circle cx="8.5" cy="6" r="2.3" fill="none" stroke="#CED0D6" stroke-width="1.3"/><path d="M17 10V13H14Z" fill="#CED0D6"/></svg>
<svg style="left:1472px;top:661px" width="14" height="14" viewBox="0 0 14 14"><circle cx="5.8" cy="5.8" r="4.8" fill="none" stroke="#CED0D6" stroke-width="1.3"/><path d="M9.3 9.3L13.2 13.2" stroke="#CED0D6" stroke-width="1.4"/></svg>
<div class="t" style="left:619px;top:718px;width:881px;text-align:center;color:#868A91"><span class="zc zu" style="width:72px">未提交更改。</span></div>
<div class="t" style="left:619px;top:739px;width:881px;text-align:center;color:#868A91"><span style="color:#548AF7"><span class="zc zu" style="width:72px">提交本地更改</span></span> (Ctrl+K)</div>
<div class="a" style="left:1500px;top:650px;width:1px;height:168px;background:#1E1F22"></div>
<svg style="left:1511px;top:660px" width="16" height="15" viewBox="0 0 16 15"><path d="M9 1L6.5 3.5L9 6M6.5 3.5H15.5M7 9L9.5 11.5L7 14M9.5 11.5H0.5" fill="none" stroke="#5E6167" stroke-width="1.2"/></svg>
<svg style="left:1539px;top:661px" width="14" height="14" viewBox="0 0 14 14"><path d="M4 1L1 4L4 7M1 4H8.5A4.5 4.5 0 0 1 8.5 13H5" fill="none" stroke="#5E6167" stroke-width="1.3"/></svg>
<svg style="left:1564px;top:662px" width="18" height="14" viewBox="0 0 18 14"><path d="M1 6C3 2.5 5.5 1 8.5 1S14 2.5 16 6C14 9.5 11.5 11 8.5 11S3 9.5 1 6Z" fill="none" stroke="#CED0D6" stroke-width="1.3"/><circle cx="8.5" cy="6" r="2.3" fill="none" stroke="#CED0D6" stroke-width="1.3"/><path d="M17 10V13H14Z" fill="#CED0D6"/></svg>
<svg style="left:1827px;top:661px" width="9" height="14" viewBox="0 0 9 15"><path d="M0.8 5L4.5 1.2L8.2 5M0.8 10L4.5 13.8L8.2 10" fill="none" stroke="#5E6167" stroke-width="1.2"/></svg>
<svg style="left:1852px;top:661px" width="10" height="14" viewBox="0 0 10 15"><path d="M0.8 1L5 5L9.2 1M0.8 14L5 10L9.2 14" fill="none" stroke="#5E6167" stroke-width="1.2"/></svg>
<div class="t" style="left:1501px;top:708px;width:375px;text-align:center;color:#868A91"><span class="zc zu" style="width:120px">选择要查看更改的提交</span></div>
<div class="a" style="left:1501px;top:767px;width:375px;height:1px;background:#1E1F22"></div>
<div class="t" style="left:1501px;top:779px;width:375px;text-align:center;color:#868A91"><span class="zc zu" style="width:72px">提交详细信息</span></div>
<div id="status" class="a"></div>
<div id="taskbar" class="a"></div>
<!-- STATUS BAR -->
<div class="a" style="left:14px;top:828px;width:9px;height:9px;border:1.5px solid #548AF7;border-radius:2px;background:#1E2A40"></div>
<div class="t" style="left:26px;top:825px;color:#A1A3AB">LED<span class="zc zu" style="width:36px">流水灯</span></div>
<svg style="left:92px;top:828px" width="6" height="9" viewBox="0 0 6 9"><path d="M0.8 0.8L4.5 4.5L0.8 8.2" fill="none" stroke="#A1A3AB" stroke-width="1.2"/></svg>
<div class="t" style="left:108px;top:825px;color:#A1A3AB">User</div>
<svg style="left:144px;top:828px" width="6" height="9" viewBox="0 0 6 9"><path d="M0.8 0.8L4.5 4.5L0.8 8.2" fill="none" stroke="#A1A3AB" stroke-width="1.2"/></svg>
<svg style="left:161px;top:828px" width="13" height="10" viewBox="0 0 13 10"><path d="M0 0.5H12M0 3.5H8M0 6.5H12M0 9.5H8" stroke="#A1A3AB" stroke-width="1"/></svg>
<div class="t" style="left:179px;top:825px;color:#A1A3AB">main.c</div>
<div class="t" style="left:1648px;top:825px;color:#A1A3AB">18:49</div>
<div class="t" style="left:1695px;top:825px;color:#A1A3AB">CRLF</div>
<div class="t" style="left:1739px;top:825px;color:#A1A3AB">UTF-8</div>
<div class="t" style="left:1789px;top:825px;color:#A1A3AB">4 <span class="zc zu" style="width:36px">个空格</span></div>
<svg style="left:1854px;top:825px" width="14" height="14" viewBox="0 0 14 14"><rect x="0.8" y="6" width="9" height="7" rx="1" fill="none" stroke="#CED0D6" stroke-width="1.2"/><path d="M7 6V3.5A2.8 2.8 0 0 1 12.6 3.5V5" fill="none" stroke="#CED0D6" stroke-width="1.2"/></svg>
<svg style="left:1883px;top:824px" width="16" height="16" viewBox="0 0 16 16"><circle cx="8" cy="8" r="7" fill="none" stroke="#CED0D6" stroke-width="1.3"/><path d="M8 4V9" stroke="#CED0D6" stroke-width="1.5"/><circle cx="8" cy="11.5" r="0.9" fill="#CED0D6"/></svg>

<!-- TASKBAR -->
<svg style="left:16px;top:860px" width="17" height="17" viewBox="0 0 17 17"><path d="M0 2.4L7 1.4V8H0ZM8 1.2L17 0V8H8ZM0 9H7V15.6L0 14.6ZM8 9H17V17L8 15.8Z" fill="#FFFFFF"/></svg>
<svg style="left:63px;top:860px" width="17" height="17" viewBox="0 0 17 17"><circle cx="10.5" cy="6.5" r="5.5" fill="none" stroke="#fff" stroke-width="1.4"/><path d="M6.5 10.5L0.8 16.2" stroke="#fff" stroke-width="1.5"/></svg>
<svg style="left:111px;top:859px" width="18" height="18" viewBox="0 0 18 18"><path d="M1 3H12M1 15H12M2 3V15M11 3V15" fill="none" stroke="#fff" stroke-width="1.3"/><path d="M15 1V5M15 7V11M15 13V17" stroke="#fff" stroke-width="1.3"/><path d="M2 9H11" stroke="#fff" stroke-width="1"/></svg>
<svg style="left:160px;top:859px" width="22" height="18" viewBox="0 0 22 18"><path d="M0 1.5H8L10 3.5H22V17H0Z" fill="#E8B33A"/><rect x="0" y="5" width="22" height="12" fill="#F8D66A"/><rect x="4" y="11" width="14" height="6" fill="#2E7FD8"/><rect x="7" y="13.5" width="8" height="3.5" fill="#F8D66A"/></svg>
<div class="a" style="left:151px;top:885px;width:25px;height:3px;background:#7FB8E8"></div>
<div class="a" style="left:176px;top:885px;width:16px;height:3px;background:#5B8DB0"></div>
<div class="a" style="left:196px;top:848px;width:48px;height:40px;background:#4D5E65"></div>
<div class="a" style="left:196px;top:885px;width:48px;height:3px;background:#7FB8E8"></div>
<svg style="left:209px;top:859px" width="21" height="19" viewBox="0 0 21 19"><path d="M7 1H20V14" fill="none" stroke="#B233E0" stroke-width="2"/><rect x="1" y="5" width="14" height="13" fill="url(#gA)"/><defs><linearGradient id="gA" x1="0" y1="0" x2="1" y2="1"><stop offset="0" stop-color="#FF3A8C"/><stop offset="1" stop-color="#C030E8"/></linearGradient></defs><rect x="3.5" y="13" width="6" height="2" fill="#2A2A3A"/></svg>
<svg style="left:1584px;top:856px" width="26" height="24" viewBox="0 0 26 24"><circle cx="10" cy="13" r="9.5" fill="#F29A1E"/><path d="M9 19C9 16 11 14.5 13.5 14.8C14.5 12.5 18.5 12.5 19.5 15.5C21.5 15.5 23 17 23 19Z" fill="#E6EEF5"/><circle cx="17" cy="5" r="5" fill="#D6332B"/><text x="17" y="8" font-size="8" font-family="Liberation Sans" fill="#fff" text-anchor="middle">1</text></svg>
<div class="t" style="left:1614px;top:860px;color:#fff;font-size:14.5px;line-height:17px;letter-spacing:-0.3px">28°C</div>
<div class="t" style="left:1655px;top:860px;color:#fff;font-size:14px;line-height:17px"><span class="zc zt" style="width:58px">大部晴朗</span></div>
<svg style="left:1727px;top:863px" width="12" height="8" viewBox="0 0 12 8"><path d="M0.8 7L6 1.5L11.2 7" fill="none" stroke="#fff" stroke-width="1.2"/></svg>
<svg style="left:1749px;top:861px" width="17" height="14" viewBox="0 0 17 14"><path d="M1 4.5H4L8 1V13L4 9.5H1Z" fill="none" stroke="#fff" stroke-width="1.1"/><path d="M11 5L15 9M15 5L11 9" stroke="#fff" stroke-width="1.1"/></svg>
<div class="t" style="left:1773px;top:860px;color:#fff;font-size:14px;line-height:17px"><span class="zc zt" style="width:14.5px">英</span></div>
<div class="t" style="left:1795px;top:851px;width:66px;text-align:center;color:#fff;font-size:12.5px;line-height:15px">17:00</div>
<div class="t" style="left:1795px;top:870px;width:66px;text-align:center;color:#fff;font-size:12.5px;line-height:15px">2024/5/31</div>
<svg style="left:1876px;top:858px" width="24" height="24" viewBox="0 0 24 24"><path d="M1 1H18V13H8L4 16V13H1Z" fill="#fff"/><path d="M4 4.5H15M4 7.5H15M4 10.5H11" stroke="#1E3440" stroke-width="1.2"/><circle cx="16" cy="17" r="6.5" fill="#1E3440" stroke="#fff" stroke-width="1.2"/><text x="16" y="21" font-size="10" font-weight="bold" font-family="Liberation Sans" fill="#fff" text-anchor="middle">1</text></svg>
<div class="a" style="left:1915px;top:848px;width:1px;height:40px;background:#50606A"></div>

</body></html>
